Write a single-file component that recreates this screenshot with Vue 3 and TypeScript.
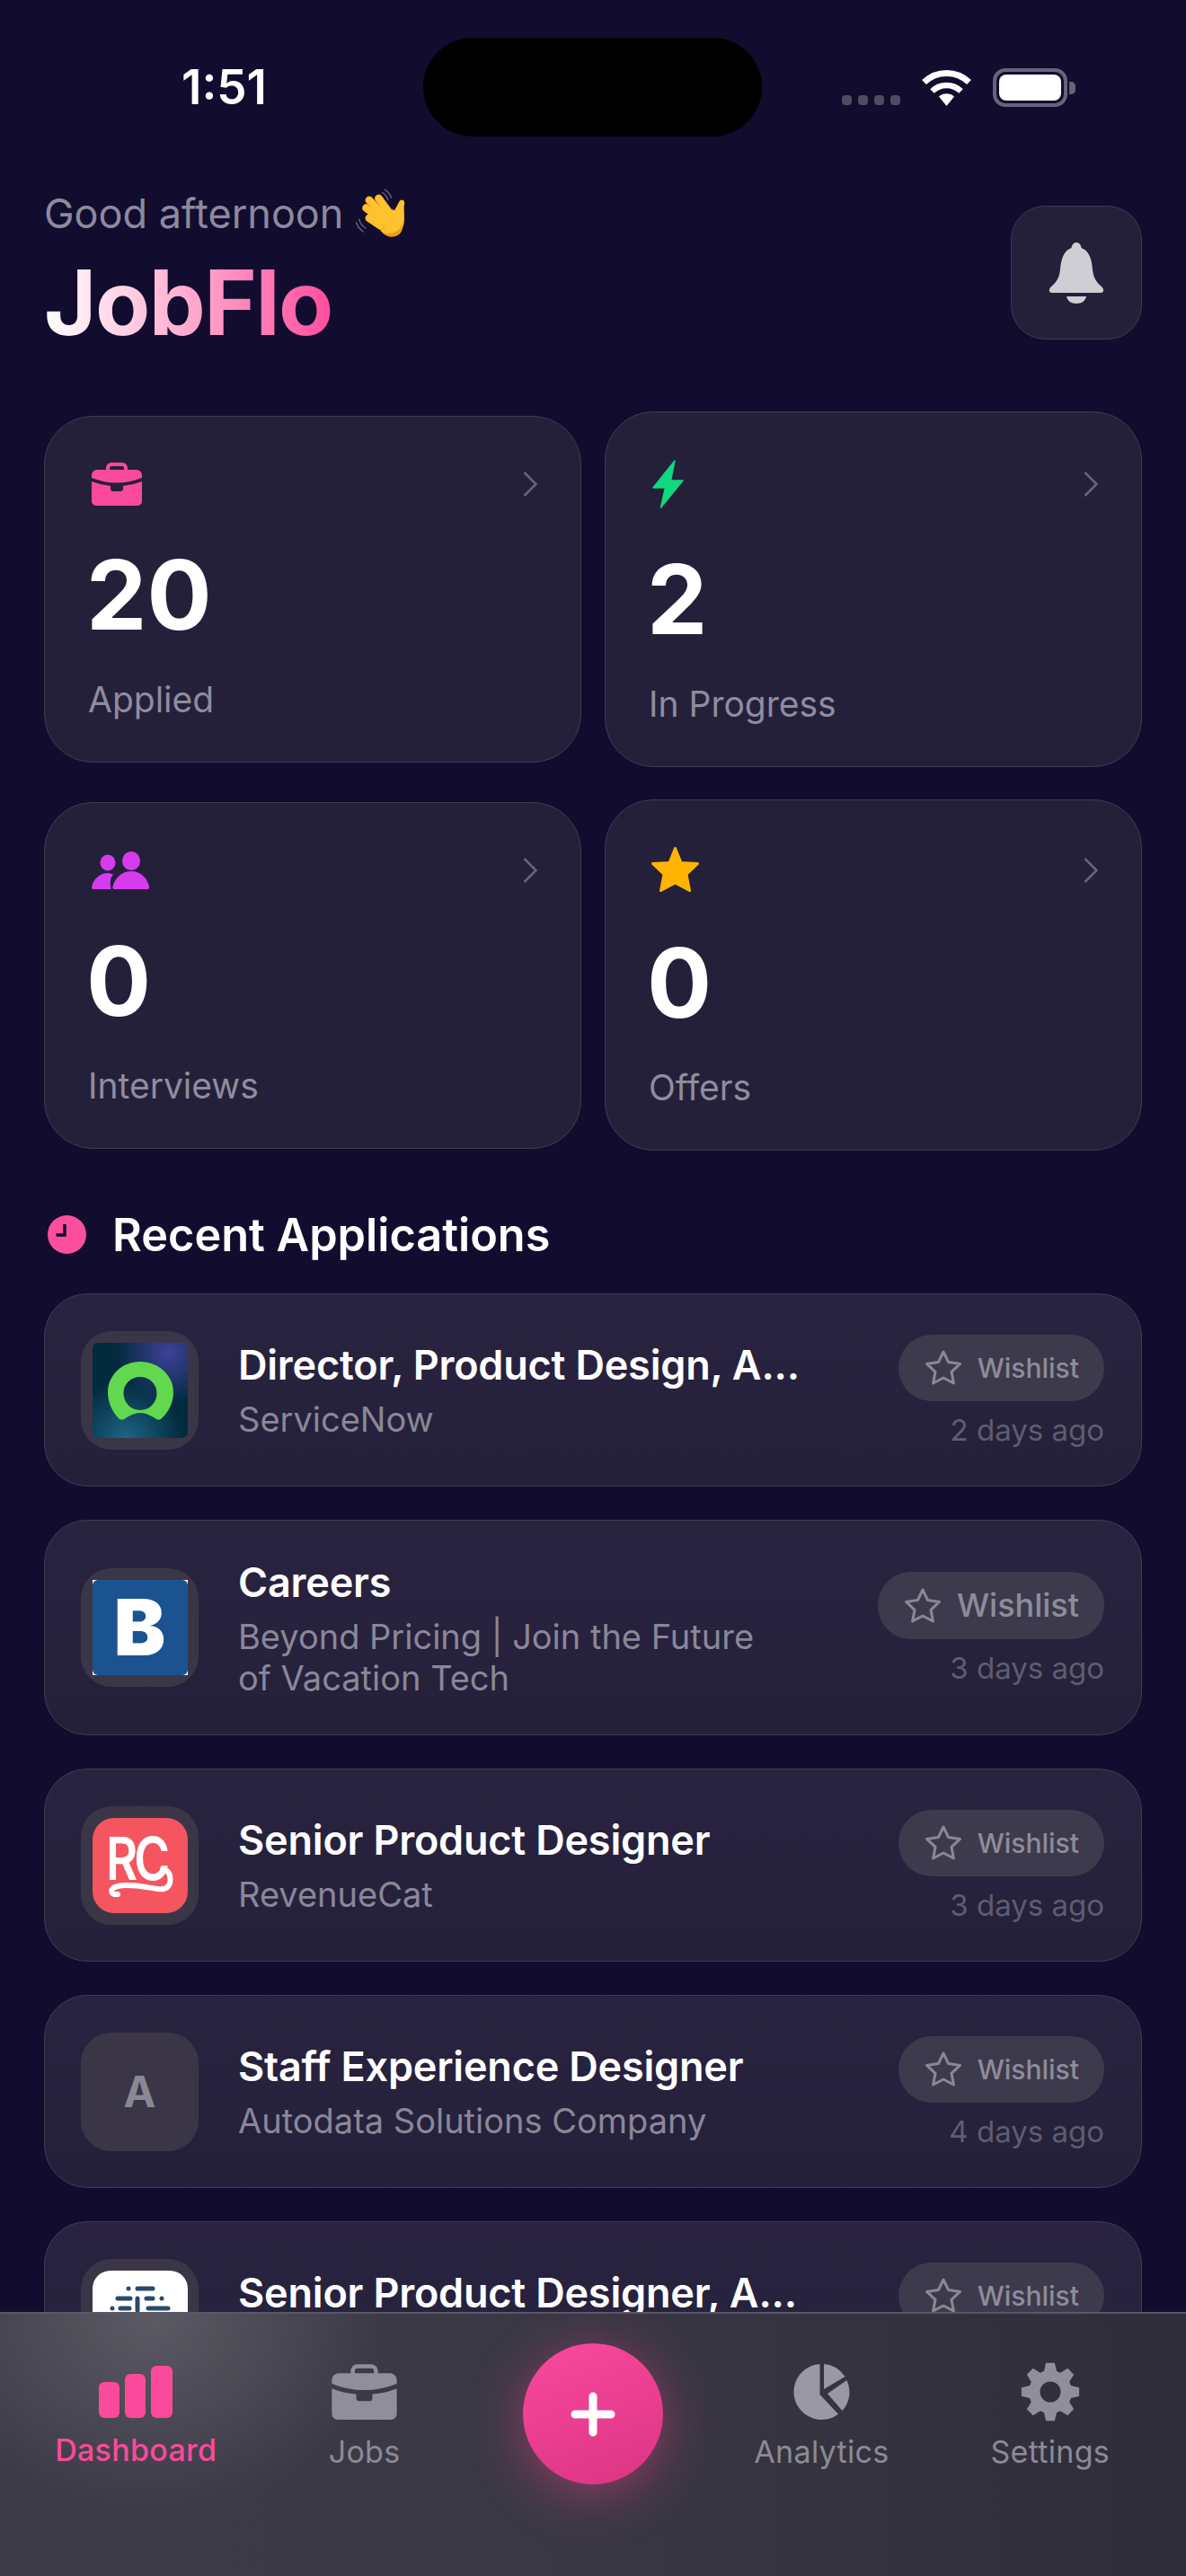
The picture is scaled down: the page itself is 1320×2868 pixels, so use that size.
<template>
    <div class="screen">
        <!-- Status bar -->
        <div class="status">
            <div class="status__left"><span class="status__time">1:51</span></div>
            <div class="status__island" />
            <div class="status__right">
                <div class="status__dots">
                    <span v-for="n in 4" :key="n" />
                </div>
                <svg class="status__wifi" viewBox="0 0 57 41" fill="none">
                    <path d="M3.5 14.5A36 36 0 0 1 53.5 14.5" stroke="#fff" stroke-width="7" />
                    <path d="M12.5 24.5A23 23 0 0 1 44.5 24.5" stroke="#fff" stroke-width="6.5" />
                    <path d="M28.5 41L20 30.5A13 13 0 0 1 37 30.5Z" fill="#fff" />
                </svg>
                <div class="status__battery">
                    <span class="status__level" />
                    <span class="status__cap" />
                </div>
            </div>
        </div>

        <!-- Header -->
        <header class="head">
            <div>
                <p class="head__greet">
                    Good afternoon
                    <svg class="head__wave" viewBox="45 25 175 170" fill="none">
                        <g stroke="#6e6a7c" stroke-width="4" stroke-linecap="round">
                            <path d="M142 30C152 36 160 46 164 58" />
                            <path d="M134 40C142 45 150 54 154 66" />
                            <path d="M46 140C50 152 58 164 70 172" />
                            <path d="M56 130C59 142 66 152 78 160" />
                        </g>
                        <path d="M125 115C140 90 165 95 175 100L190 72C196 60 212 64 208 80C204 100 214 130 200 165C190 195 150 195 130 170C115 150 115 130 125 115Z" fill="#fdc22e" />
                        <path d="M200 165C190 195 150 195 130 170C150 184 185 180 200 150C206 135 207 120 207 110C210 130 208 148 200 165Z" fill="#f09a1c" />
                        <g stroke-linecap="round">
                            <path v-for="d in WAVE_FINGERS" :key="'u' + d" :d="d" stroke="#e8941a" stroke-width="27" />
                            <path v-for="d in WAVE_FINGERS" :key="'t' + d" :d="d" stroke="#fdc22e" stroke-width="23" />
                        </g>
                        <path d="M128 112C145 98 170 100 178 110L176 150L135 150Z" fill="#fdc22e" />
                    </svg>
                </p>
                <h1 class="head__title">JobFlo</h1>
            </div>
            <button class="head__bell">
                <svg viewBox="0 0 62 68" width="62" height="68" fill="#cfced4">
                    <path d="M31 0c3 0 5 2.500 5.500 6C45 9 48 18 49 30c1 10 5 15 10 19c3 3 3 7-1 7H4c-4 0-4-4-1-7c5-4 9-9 10-19c1-12 4-21 12.500-24C26 2.500 28 0 31 0Z" />
                    <path d="M20 60H42C41 65 37 68 31 68S21 65 20 60Z" />
                </svg>
            </button>
        </header>

        <!-- Stat cards -->
        <section class="stats">
            <div v-for="stat in stats" :key="stat.label" class="stat">
                <div class="stat__top" :class="stat.kind">
                    <svg v-if="stat.kind === 'case'" width="56" height="48" viewBox="0 0 56 48" fill="#fb4a9b">
                        <path d="M18 10V6a4 4 0 0 1 4-4h12a4 4 0 0 1 4 4v4" fill="none" stroke="#fb4a9b" stroke-width="4" />
                        <path :d="CASE_TOP" />
                        <path :d="CASE_BOTTOM" />
                    </svg>
                    <svg v-else-if="stat.kind === 'bolt'" width="35" height="54" viewBox="0 0 35 54" fill="#10d97f" stroke="#10d97f" stroke-width="1.500" stroke-linejoin="round">
                        <path d="M25 1L1 31H14.500L9.500 53L34 23H20.500Z" />
                    </svg>
                    <svg v-else-if="stat.kind === 'people'" width="64" height="42" viewBox="0 0 64 42" fill="#d53cf0">
                        <ellipse cx="18" cy="12.500" rx="8.500" ry="9" />
                        <ellipse cx="44" cy="10.500" rx="10" ry="10.500" />
                        <path d="M26 42c-2 0-3-1-2.500-3C26 29 34 22 44 22s18 7 20 17c.4 2-.5 3-2 3Z" />
                        <path d="M2 42Q0 42 0 40C1.500 31 9 24 18 24Q21 24 24 25.500Q19 31 21.500 42Z" />
                    </svg>
                    <svg v-else class="stat__star" width="55" height="53" viewBox="0 0 55 53" fill="#ffb400" stroke="#ffb400" stroke-width="3" stroke-linejoin="round">
                        <path d="M27.500 2.500L34 18.500L52.500 19.500L40 31.500L43.500 49.500L27.500 41L11.500 49.500L15 31.500L2.500 19.500L21 18.500Z" />
                    </svg>
                    <svg class="stat__chev" width="16" height="28" viewBox="0 0 16 28" fill="none" stroke="#67647a" stroke-width="2.500">
                        <path d="M1.500 1L14.500 14L1.500 27" />
                    </svg>
                </div>
                <div class="stat__value">{{ stat.value }}</div>
                <div class="stat__label">{{ stat.label }}</div>
            </div>
        </section>

        <!-- Recent list -->
        <div class="recent-head">
            <svg width="43" height="43" viewBox="0 0 43 43">
                <circle cx="21.500" cy="21.500" r="21.500" fill="#fb4f9e" />
                <path d="M19 10V22H9.500" fill="none" stroke="#130d2f" stroke-width="3.500" />
            </svg>
            <h2>Recent Applications</h2>
        </div>

        <section class="list">
            <div v-for="job in jobs" :key="job.title + job.company" class="job">
                <div class="job__logo">
                    <span v-if="job.logo === 'now'" class="mark mark--now">
                        <svg width="106" height="106" viewBox="0 0 106 106">
                            <path fill="#62d84e" fill-rule="evenodd" d="M53 21C33 21 17 36 17 55C17 66 22 77 29 84C31 86 33 86 35 85C41 81 47 78 53 78C59 78 65 81 71 85C73 86 75 86 77 84C85 77 90 66 90 55C90 36 73 21 53 21ZM53 38C42.500 38 34.500 46 34.500 56C34.500 66 42 75 53 75C64 75 71.500 66 71.500 56C71.500 46 63.500 38 53 38Z" />
                        </svg>
                    </span>
                    <span v-else-if="job.logo === 'beyond'" class="mark mark--beyond"><span>B</span></span>
                    <span v-else-if="job.logo === 'rc'" class="mark mark--rc">
                        <span class="mark__rc">RC</span>
                        <svg width="106" height="106" viewBox="0 0 106 106" fill="none" stroke="#fff" stroke-width="6" stroke-linecap="round">
                            <path d="M28 85C19 86 19 78 28 76C42 73 58 77 72 79C84 81 88 74 86 64C85 60 82 58 78 57" />
                        </svg>
                    </span>
                    <span v-else-if="job.logo === 'dots'" class="mark mark--dots">
                        <svg width="106" height="106" viewBox="0 0 106 106" fill="none" stroke="#2b4a6a" stroke-width="5" stroke-linecap="round">
                            <path d="M40 20h.01M50 20H67M28 31H42M50 31V44M60 31H67M77 31h.01M22 42h.01M31 42H41M62 42H84" />
                        </svg>
                    </span>
                    <span v-else class="job__initial">{{ job.logo }}</span>
                </div>
                <div class="job__body">
                    <div class="job__title">{{ job.title }}</div>
                    <div class="job__company">{{ job.company }}</div>
                </div>
                <div class="job__side">
                    <div class="pill" :class="{ 'pill--big': job.big }">
                        <svg width="40" height="39" viewBox="0 0 40 39" fill="none" stroke="#8b8894" stroke-width="3" stroke-linejoin="round">
                            <path d="M20 2L25.600 13.600L38.500 15.400L29 24.400L31.400 37L20 31L8.600 37L11 24.400L1.500 15.400L14.400 13.600Z" />
                        </svg>
                        <span>Wishlist</span>
                    </div>
                    <div class="job__date">{{ job.date }}</div>
                </div>
            </div>
        </section>

        <!-- Tab bar -->
        <nav class="tabs">
            <div class="tab tab--active">
                <div class="tab__icon">
                    <svg width="82" height="58" viewBox="0 0 82 58" fill="#fb4a9b">
                        <rect x="0" y="18" width="23" height="40" rx="6" />
                        <rect x="29" y="9" width="23" height="49" rx="6" />
                        <rect x="58" y="0" width="24" height="58" rx="6" />
                    </svg>
                </div>
                <span>Dashboard</span>
            </div>
            <div class="tab">
                <div class="tab__icon">
                    <svg width="73" height="62" viewBox="0 0 56 48" fill="#908e9a">
                        <path d="M18 10V6a4 4 0 0 1 4-4h12a4 4 0 0 1 4 4v4" fill="none" stroke="#908e9a" stroke-width="3.500" />
                        <path :d="CASE_TOP" />
                        <path :d="CASE_BOTTOM" />
                    </svg>
                </div>
                <span>Jobs</span>
            </div>
            <div class="tab tab--add">
                <button class="fab">
                    <svg width="50" height="50" viewBox="0 0 50 50" stroke="#fff" stroke-width="9" stroke-linecap="round">
                        <path d="M25 5V45M5 25H45" />
                    </svg>
                </button>
            </div>
            <div class="tab">
                <div class="tab__icon">
                    <svg width="63" height="64" viewBox="0 0 63 64" fill="#9a98a3">
                        <path d="M29.500 1V35L50 56.800A31 31 0 1 1 29.500 1Z" />
                        <path d="M34 1V29L57.500 15A31 31 0 0 0 34 1Z" />
                        <path d="M38 34L59.500 19A31 31 0 0 1 54.500 53Z" />
                    </svg>
                </div>
                <span>Analytics</span>
            </div>
            <div class="tab">
                <div class="tab__icon">
                    <svg width="66" height="66" viewBox="0 0 66 66" fill="#908e9a">
                        <path fill-rule="evenodd" :d="gearPath" />
                    </svg>
                </div>
                <span>Settings</span>
            </div>
        </nav>
    </div>
</template>

<script setup lang="ts">
interface Stat {
    kind: string;
    value: number;
    label: string;
}

interface Job {
    logo: string;
    title: string;
    company: string;
    date: string;
    big?: boolean;
}

const CASE_TOP = 'M6 8H50a6 6 0 0 1 6 6v3Q42 22.500 28 22.500Q14 22.500 0 17v-3a6 6 0 0 1 6-6Z';
const CASE_BOTTOM = 'M0 21Q10 25 21 26v3a3 3 0 0 0 3 3h8a3 3 0 0 0 3-3v-3Q46 25 56 21V43a5 5 0 0 1-5 5H5a5 5 0 0 1-5-5Z';

const WAVE_FINGERS = [
    'M122 60L155 105',
    'M90 66L140 118',
    'M80 92L130 132',
    'M90 126L128 152',
];

const stats: Stat[] = [
    { kind: 'case', value: 20, label: 'Applied' },
    { kind: 'bolt', value: 2, label: 'In Progress' },
    { kind: 'people', value: 0, label: 'Interviews' },
    { kind: 'star', value: 0, label: 'Offers' },
];

const jobs: Job[] = [
    { logo: 'now', title: 'Director, Product Design, A...', company: 'ServiceNow', date: '2 days ago' },
    { logo: 'beyond', title: 'Careers', company: 'Beyond Pricing | Join the Future of Vacation Tech', date: '3 days ago', big: true },
    { logo: 'rc', title: 'Senior Product Designer', company: 'RevenueCat', date: '3 days ago' },
    { logo: 'A', title: 'Staff Experience Designer', company: 'Autodata Solutions Company', date: '4 days ago' },
    { logo: 'dots', title: 'Senior Product Designer, A...', company: '', date: '4 days ago' },
];

// 8 tooth gear with a round hole, built once from polar points
function buildGear(): string {
    const cx = 33;
    const cy = 33;
    const pts: string[] = [];
    for (let i = 0; i < 8; i++) {
        const a = (i * Math.PI) / 4 - Math.PI / 2;
        const step = [
            [-0.3, 24],
            [-0.15, 32.5],
            [0.15, 32.5],
            [0.3, 24],
        ];
        for (const [off, r] of step) {
            pts.push(`${(cx + Math.cos(a + off) * r).toFixed(2)} ${(cy + Math.sin(a + off) * r).toFixed(2)}`);
        }
    }
    const r = 11.5;
    return `M${pts.join('L')}Z M${cx - r} ${cy}a${r} ${r} 0 1 0 ${r * 2} 0a${r} ${r} 0 1 0 ${-r * 2} 0Z`;
}

const gearPath = buildGear();
</script>

<style>
html, body { margin: 0; background: #120c2f; }
</style>

<style scoped>
.screen {
    position: relative;
    width: 1320px;
    height: 2868px;
    overflow: hidden;
    background: #120c2f;
    color: #fff;
    font-family: Inter, "Noto Sans", sans-serif;
}

.status {
    display: grid;
    grid-template-columns: 471px 377px 1fr;
    padding-top: 42px;
    height: 110px;
}
.status__left {
    display: flex;
    align-items: center;
    justify-content: center;
    padding-left: 28px;
}
.status__time {
    font-size: 53px;
    font-weight: 600;
    line-height: 1;
}
.status__island {
    height: 110px;
    background: #000;
    border-radius: 55px;
}
.status__right {
    display: flex;
    align-items: center;
    gap: 23px;
    padding-left: 89px;
}
.status__dots {
    display: flex;
    gap: 7px;
    align-self: flex-end;
    margin-bottom: 35px;
}
.status__dots span {
    width: 11px;
    height: 11px;
    border-radius: 4px;
    background: #4f4b63;
}
.status__wifi {
    width: 57px;
    height: 41px;
}
.status__battery {
    position: relative;
    box-sizing: border-box;
    width: 83px;
    height: 43px;
    padding: 3px;
    border: 4px solid #67647a;
    border-radius: 14px;
}
.status__level {
    display: block;
    width: 100%;
    height: 100%;
    background: #fff;
    border-radius: 8px;
}
.status__cap {
    position: absolute;
    right: -13px;
    top: 11px;
    width: 7px;
    height: 14px;
    background: #67647a;
    border-radius: 0 5px 5px 0;
}

.head {
    display: flex;
    justify-content: space-between;
    padding: 0 49px;
}
.head__greet {
    display: flex;
    align-items: center;
    gap: 14px;
    margin: 57px 0 0;
    height: 56px;
    font-size: 45px;
    color: #8c8a9c;
}
.head__wave {
    width: 58px;
    height: 57px;
}
.head__title {
    margin: 22px 0 0;
    font-size: 100px;
    line-height: 100px;
    font-weight: 700;
    letter-spacing: -1.500px;
    background: linear-gradient(90deg, #ffffff 0%, #ffb4d4 45%, #ff4d9d 100%);
    background-clip: text;
    -webkit-background-clip: text;
    color: transparent;
    width: fit-content;
}
.head__bell {
    display: flex;
    align-items: center;
    justify-content: center;
    box-sizing: border-box;
    width: 146px;
    height: 149px;
    margin-top: 77px;
    padding: 0;
    background: #25203a;
    border: 1px solid #3d394f;
    border-radius: 38px;
}

.stats {
    display: grid;
    grid-template-columns: 598px 598px;
    column-gap: 26px;
    row-gap: 36px;
    align-items: center;
    margin-top: 71px;
    padding: 0 49px;
}
.stat {
    box-sizing: border-box;
    padding: 51px 48px 45px 48px;
    background: #25203a;
    border: 1px solid #3f3b52;
    border-radius: 54px;
}
.stat__top {
    display: flex;
    align-items: center;
    justify-content: space-between;
    height: 48px;
    padding-left: 4px;
}
.stat__top.bolt { height: 58px; }
.stat__top.star { height: 53px; }
.stat__star { margin-left: -2px; }
.stat__value {
    margin: 45px 0 0 -2px;
    font-size: 107px;
    line-height: 108px;
    font-weight: 700;
}
.stat__label {
    margin-top: 39px;
    font-size: 39px;
    line-height: 48px;
    color: #8f8ca0;
}

.recent-head {
    display: flex;
    align-items: center;
    gap: 29px;
    height: 50px;
    margin-top: 68px;
    padding-left: 53px;
}
.recent-head h2 {
    margin: 0;
    font-size: 50.400px;
    font-weight: 600;
}

.list {
    display: flex;
    flex-direction: column;
    gap: 37px;
    margin-top: 41px;
    padding: 0 49px;
}
.job {
    display: flex;
    align-items: center;
    flex-shrink: 0;
    box-sizing: border-box;
    padding: 40.500px 41px 40.500px 40px;
    background: linear-gradient(180deg, #292340 0%, #25203a 100%);
    border: 1px solid #3f3b52;
    border-radius: 48px;
}
.job__logo {
    display: flex;
    align-items: center;
    justify-content: center;
    flex-shrink: 0;
    width: 131px;
    height: 132px;
    background: #3a3648;
    border-radius: 34px;
}
.job__initial {
    font-size: 48px;
    font-weight: 700;
    color: #8a8894;
}
.mark {
    position: relative;
    display: block;
    width: 106px;
    height: 106px;
    overflow: hidden;
}
.mark svg { display: block; }
.mark--now {
    background:
        radial-gradient(circle at 80% 10%, #3f4199 0%, rgba(63,65,153,0) 45%),
        radial-gradient(circle at 35% 100%, #1e6486 0%, rgba(30,100,134,0) 50%),
        #032b3e;
    border-radius: 6px;
}
.mark--beyond {
    background: #fff;
}
.mark--beyond span {
    display: block;
    height: 100%;
    background: #1b5391;
    border-radius: 6px;
    text-align: center;
    font-size: 86px;
    font-weight: 900;
    line-height: 106px;
    color: #fff;
}
.mark--rc {
    background: #f4555e;
    border-radius: 24px;
}
.mark__rc {
    position: absolute;
    left: 15px;
    top: 10px;
    font-size: 66px;
    line-height: 70px;
    font-weight: 600;
    letter-spacing: -5px;
    color: #fff;
    transform: scaleX(0.82);
    transform-origin: left center;
}
.mark--rc svg {
    position: absolute;
    left: 0;
    top: 0;
}
.mark--dots {
    background: #fff;
    border-radius: 20px;
}
.job__body {
    flex: 1;
    min-width: 0;
    margin-left: 44px;
}
.job__title {
    font-size: 45px;
    line-height: 55px;
    font-weight: 560;
    letter-spacing: -0.200px;
    white-space: nowrap;
}
.job__company {
    max-width: 600px;
    margin-top: 10px;
    font-size: 38px;
    line-height: 46px;
    color: #8a8799;
    min-height: 46px;
}
.job__side {
    display: flex;
    flex-direction: column;
    align-items: flex-end;
    flex-shrink: 0;
}
.pill {
    display: flex;
    align-items: center;
    box-sizing: border-box;
    height: 74px;
    padding: 0 28px 0 30px;
    gap: 18px;
    background: #3d3a4d;
    border-radius: 37px;
    font-size: 30px;
    font-weight: 500;
    color: #8f8c99;
}
.pill--big {
    height: 75px;
    font-size: 36px;
}
.job__date {
    margin-top: 14px;
    font-size: 33px;
    line-height: 36px;
    color: #5f5c70;
}

.tabs {
    position: absolute;
    left: 0;
    right: 0;
    bottom: 0;
    display: grid;
    grid-template-columns: repeat(5, 1fr);
    box-sizing: border-box;
    height: 294px;
    padding: 0 24px;
    background:
        radial-gradient(ellipse 260px 220px at 170px 0, rgba(255,255,255,0.16), rgba(255,255,255,0)),
        linear-gradient(90deg, #3d3b47 0%, #3a3844 45%, #302d3b 100%);
    border-top: 2px solid #5a5866;
}
.tab {
    display: flex;
    flex-direction: column;
    align-items: center;
    padding-top: 54px;
    font-size: 34px;
    line-height: 40px;
    letter-spacing: 0.3px;
    font-weight: 400;
    color: #8c8a96;
}
.tab span { margin-top: 14px; }
.tab__icon {
    display: flex;
    align-items: center;
    justify-content: center;
    height: 66px;
}
.tab--active { color: #fb4a9b; font-weight: 500; }
.tab--active span { margin-top: 12px; }
.tab--add { padding-top: 33px; }
.fab {
    display: flex;
    align-items: center;
    justify-content: center;
    width: 156px;
    height: 157px;
    padding: 0;
    border: none;
    border-radius: 50%;
    background: linear-gradient(160deg, #f8499e 0%, #dd3483 100%);
    box-shadow: 0 10px 60px rgba(249, 70, 143, 0.45);
}
</style>
